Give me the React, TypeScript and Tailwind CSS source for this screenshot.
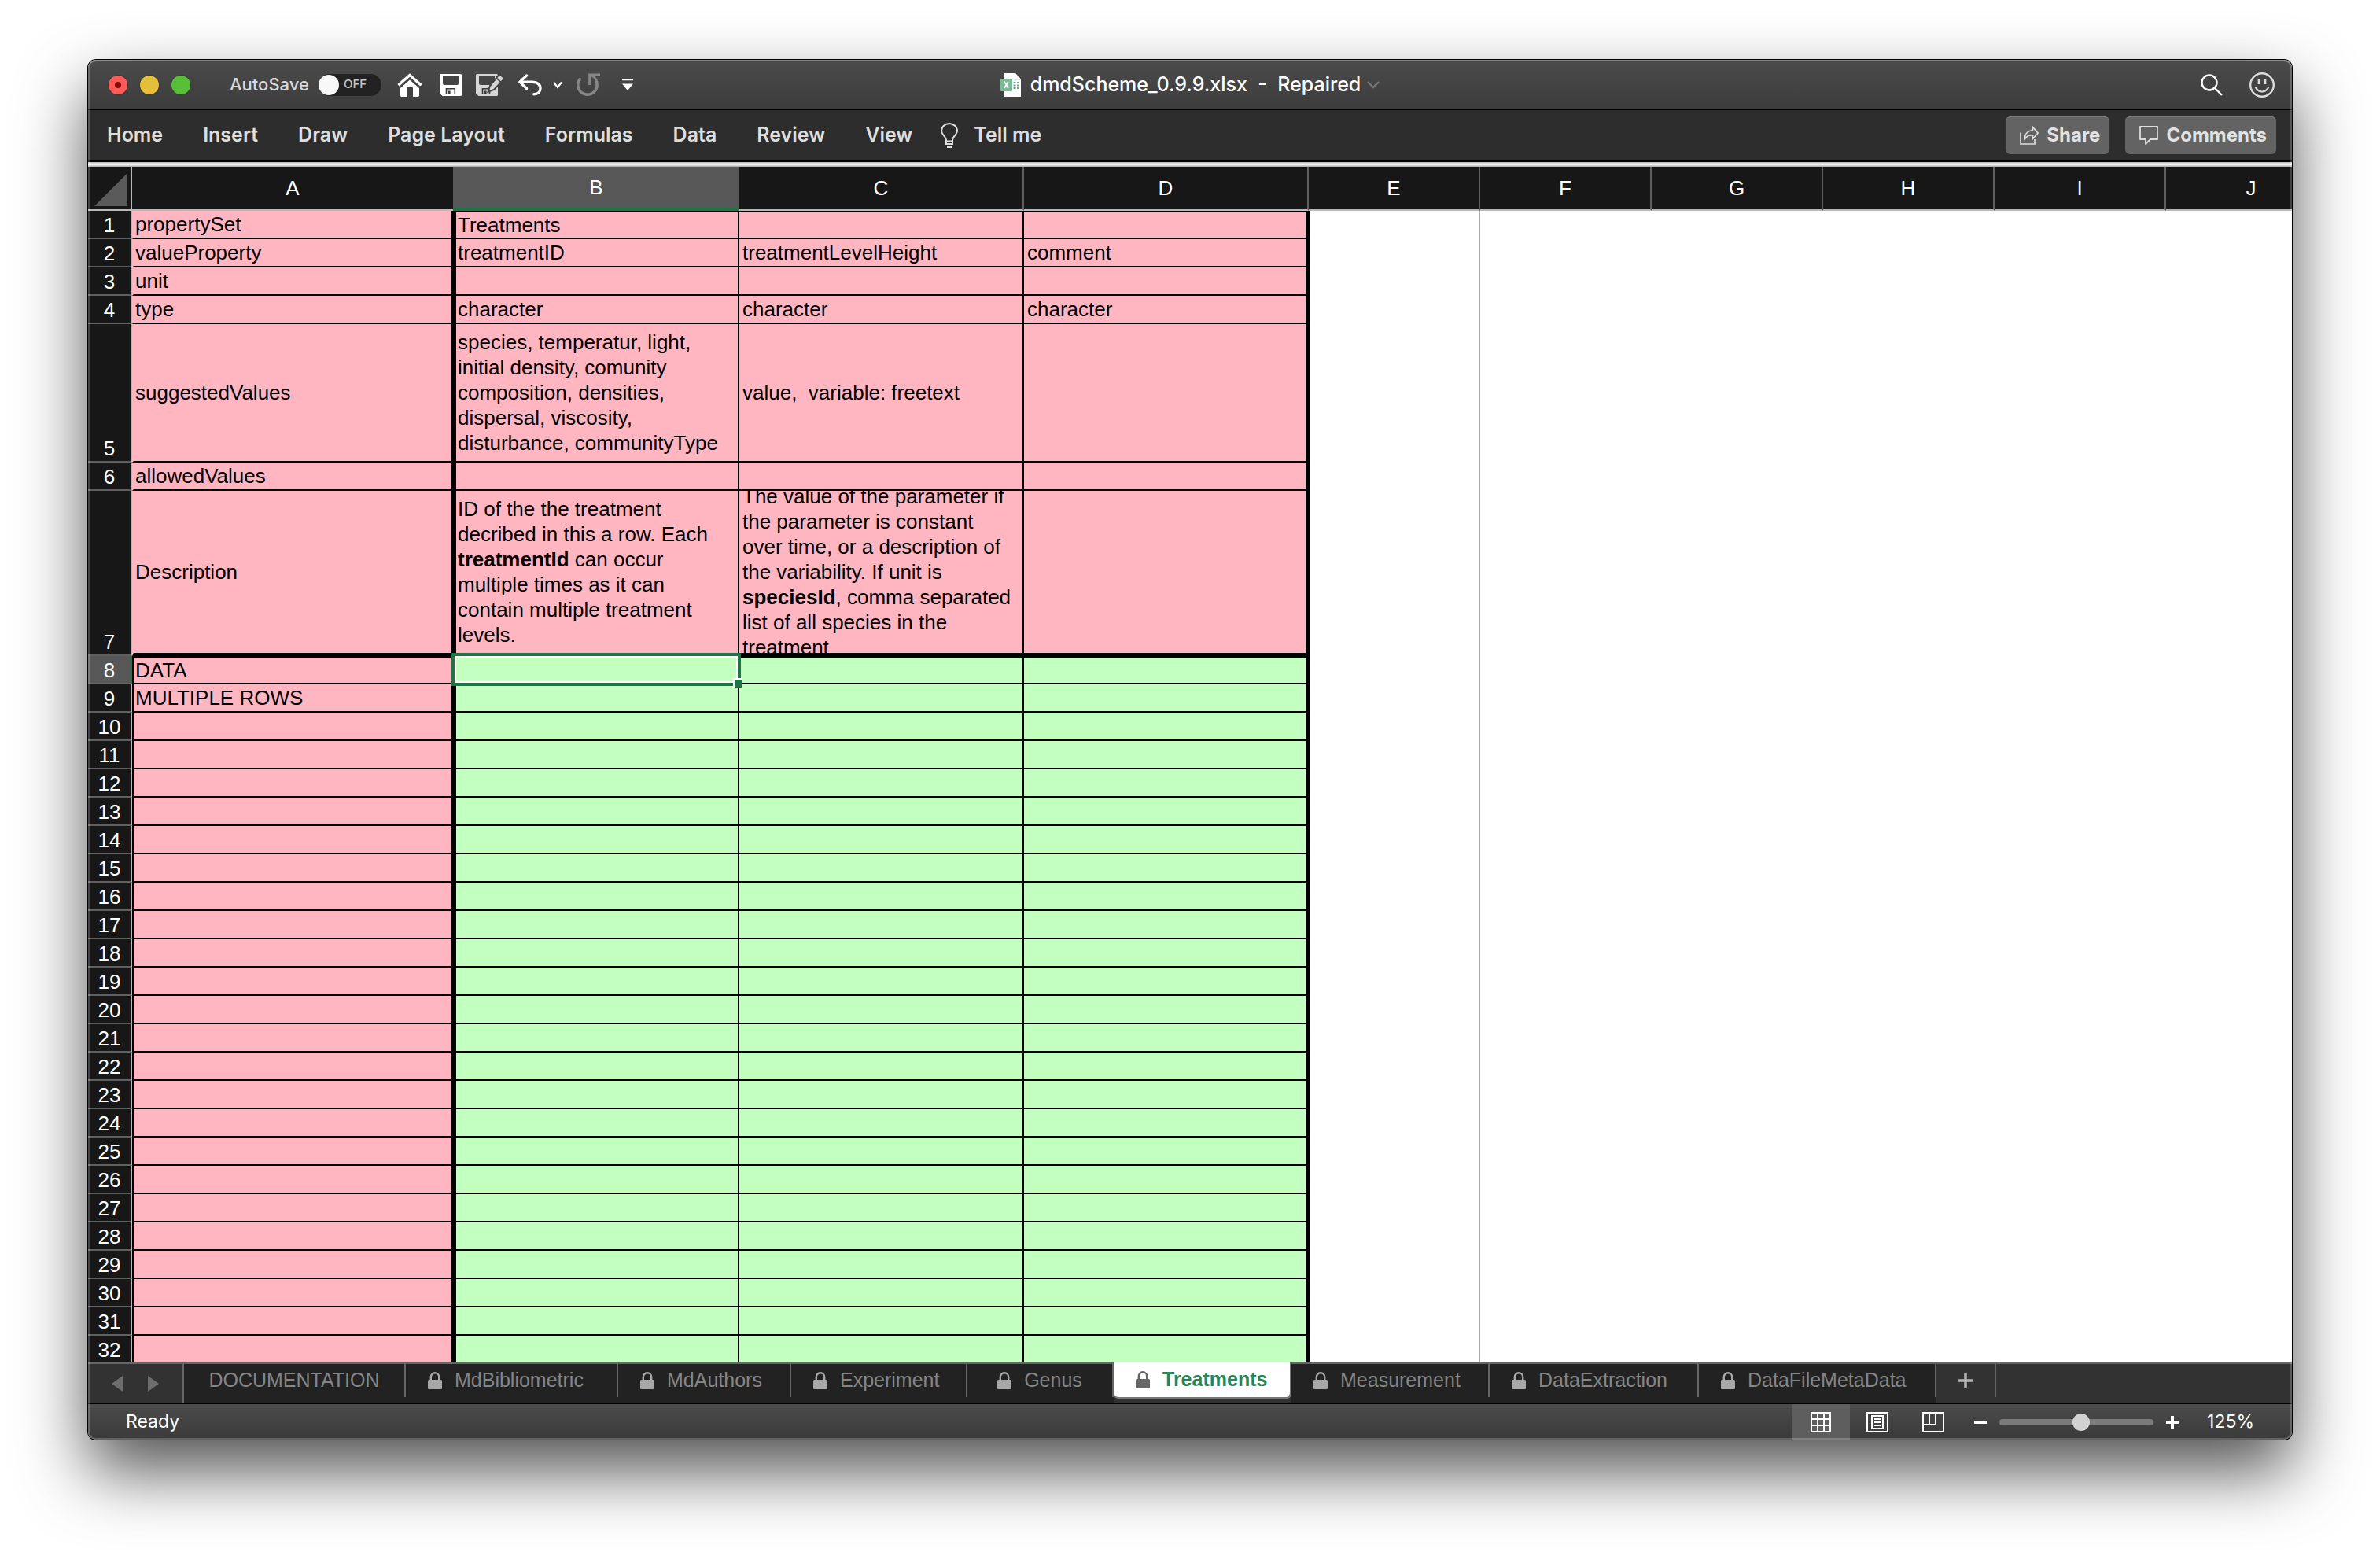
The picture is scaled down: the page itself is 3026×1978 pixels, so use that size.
import React from "react";

type Cell = React.ReactNode;

interface SheetRow {
  height: string;
  kind: "meta" | "metaEnd" | "data";
  cells: [Cell, Cell, Cell, Cell];
}

const metaRows: SheetRow[] = [
  { height: "h-9", kind: "meta", cells: ["propertySet", "Treatments", "", ""] },
  { height: "h-9", kind: "meta", cells: ["valueProperty", "treatmentID", "treatmentLevelHeight", "comment"] },
  { height: "h-9", kind: "meta", cells: ["unit", "", "", ""] },
  { height: "h-9", kind: "meta", cells: ["type", "character", "character", "character"] },
  {
    height: "h-[176px]",
    kind: "meta",
    cells: [
      "suggestedValues",
      "species, temperatur, light, initial density, comunity composition, densities, dispersal, viscosity, disturbance, communityType",
      "value,  variable: freetext",
      "",
    ],
  },
  { height: "h-9", kind: "meta", cells: ["allowedValues", "", "", ""] },
  {
    height: "h-[210px]",
    kind: "metaEnd",
    cells: [
      "Description",
      <>
        ID of the the treatment decribed in this a row. Each <b>treatmentId</b> can occur multiple times as it can
        contain multiple treatment levels.
      </>,
      <>
        The value of the parameter if the parameter is constant over time, or a description of the variability. If unit
        is <b>speciesId</b>, comma separated list of all species in the treatment
      </>,
      "",
    ],
  },
];

const dataRows: SheetRow[] = Array.from({ length: 25 }, (_, i) => ({
  height: "h-9",
  kind: "data" as const,
  cells: [i === 0 ? "DATA" : i === 1 ? "MULTIPLE ROWS" : "", "", "", ""] as [Cell, Cell, Cell, Cell],
}));

const rows = [...metaRows, ...dataRows];
const SELECTED_ROW = 8;

const ribbonTabs = ["Home", "Insert", "Draw", "Page Layout", "Formulas", "Data", "Review", "View"];

const sheets = [
  { name: "DOCUMENTATION", locked: false, size: "w-[282px] justify-center" },
  { name: "MdBibliometric", locked: true, size: "w-[270px] pl-7" },
  { name: "MdAuthors", locked: true, size: "w-[220px] pl-7" },
  { name: "Experiment", locked: true, size: "w-[224px] pl-7" },
  { name: "Genus", locked: true, size: "w-[186px] justify-center" },
  { name: "Treatments", locked: true, active: true, size: "w-[226px] pl-7" },
  { name: "Measurement", locked: true, size: "w-[252px] pl-7" },
  { name: "DataExtraction", locked: true, size: "w-[266px] pl-7" },
  { name: "DataFileMetaData", locked: true, size: "w-[302px] pl-7" },
];

function HomeIcon() {
  return (
    <svg className="h-[30px] w-8" viewBox="0 0 32 30" fill="none">
      <path d="M1.5 15.2 16 2.4l14.5 12.8" stroke="#fff" strokeWidth="3.4" />
      <path
        d="M16 8.6 28 19v9.6q0 1.4-1.4 1.4H20V19q0-1-1-1h-6q-1 0-1 1v11H5.4Q4 30 4 28.6V19z"
        fill="#fff"
      />
    </svg>
  );
}

function SaveIcon() {
  return (
    <svg className="size-7" viewBox="0 0 28 28" fill="none">
      <path
        fillRule="evenodd"
        d="M1.5 0h25Q28 0 28 1.5v25q0 1.5-1.5 1.5h-23L0 24.5v-23Q0 0 1.5 0zM4 2v10q0 2 2 2h16q2 0 2-2V2z"
        fill="#fff"
      />
      <path d="M8.5 26v-7.2h10.8V26" stroke="#3a3a3a" strokeWidth="1.6" />
      <path d="M10 21.5h3.6V26H10z" fill="#3a3a3a" />
    </svg>
  );
}

function SaveAsIcon() {
  return (
    <svg className="h-7 w-9" viewBox="0 0 36 28" fill="none">
      <path
        fillRule="evenodd"
        d="M1.5 0h25Q28 0 28 1.5v25q0 1.5-1.5 1.5h-23L0 24.5v-23Q0 0 1.5 0zM4 2v10q0 2 2 2h16q2 0 2-2V2z"
        fill="#d6d6d6"
      />
      <path d="M8.5 26v-7.2h9V26" stroke="#3a3a3a" strokeWidth="1.6" />
      <path d="M10 21.5h3.6V26H10z" fill="#3a3a3a" />
      <path
        d="m31.5 1.2 3.6 3.4q1.2 1.3 0 2.6L23 20l-7.5 2.8L18 15 29 1.3q1.2-1.3 2.5-.1z"
        fill="#d6d6d6"
        stroke="#434343"
        strokeWidth="2"
      />
      <path d="m25.8 4.8 6 5.6" stroke="#434343" strokeWidth="1.8" />
    </svg>
  );
}

function UndoIcon() {
  return (
    <svg className="h-7 w-[30px]" viewBox="0 0 30 28" fill="none" stroke="#fff" strokeWidth="3.4" strokeLinecap="round">
      <path d="M10.5 2 2 10.2l8.5 8.3" />
      <path d="M3 10.2h15.5c5.5 0 9.5 3.2 9.5 7.8s-3 7.8-8.2 7.8" />
    </svg>
  );
}

function RedoIcon() {
  return (
    <svg className="size-[30px]" viewBox="0 0 30 30" fill="none" stroke="#868686" strokeWidth="3.6">
      <path d="M4.2 7.6A12.2 12.2 0 1 0 25 10" strokeLinecap="round" />
      <path d="M17 15V2.2h13" />
      <path d="M17 2.2q7 2.4 9.5 9" strokeWidth="2.5" />
    </svg>
  );
}

function WorkbookIcon() {
  return (
    <svg className="h-[30px] w-[26px]" viewBox="0 0 26 30" fill="none">
      <path d="M4 0h15l7 7.5V30H4z" fill="#fff" />
      <path d="M18.5 0v8H26" stroke="#c9c9c9" strokeWidth="1" />
      <rect y="7" width="15" height="16" rx="1" fill="#7dbb98" />
      <path d="m5 10.5 5 8.5m0-8.5-5 8.5" stroke="#fff" strokeWidth="1.8" />
      <path d="M16.5 12h3m1.5 0h3m-7.5 3.5h3m1.5 0h3m-7.5 3.5h3m1.5 0h3" stroke="#6aa98c" strokeWidth="2.2" />
    </svg>
  );
}

function SmileIcon() {
  return (
    <svg className="size-8" viewBox="0 0 32 32" fill="none" stroke="#dcdcdc">
      <circle cx="16" cy="16" r="14.8" strokeWidth="2.4" />
      <path d="M12.2 8.5v6.5M19.8 8.5v6.5" strokeWidth="3" />
      <path d="M7.5 18.5q3 6 8.5 6t8.5-6" strokeWidth="2" />
    </svg>
  );
}

function ShareIcon() {
  return (
    <svg className="size-6" viewBox="0 0 24 24" fill="none" stroke="#dcdcdc" strokeWidth="1.7">
      <path d="M1 8.5V23h18v-6" />
      <path d="M16.5 1.5 23 9l-6.5 7.5V12Q9.5 11 6 17.5 6.5 6.5 16.5 5.5z" />
    </svg>
  );
}

function CommentIcon() {
  return (
    <svg className="size-6" viewBox="0 0 24 24" fill="none" stroke="#dcdcdc" strokeWidth="1.8">
      <path d="M1 1h22v16h-9l-6 6v-6H1z" strokeLinejoin="round" />
    </svg>
  );
}

function LockIcon({ color }: { color: string }) {
  return (
    <svg className="h-[22px] w-[18px] shrink-0" viewBox="0 0 18 22" fill="none">
      <path d="M3.8 11V6.5a5.2 5.2 0 0 1 10.4 0V11" stroke={color} strokeWidth="2.4" />
      <rect y="10" width="18" height="12" rx="1.5" fill={color} />
    </svg>
  );
}

function TitleBar() {
  return (
    <header className="grid h-16 shrink-0 grid-cols-[1fr_auto_1fr] items-center border-b border-black bg-linear-to-b from-[#4b4b4b] to-[#3c3c3c]">
      <div className="flex items-center pl-6.5">
        <div className="flex gap-4">
          <button aria-label="Close" className="flex size-6 items-center justify-center rounded-full bg-[#fc5b57] ring-1 ring-[#3f3536]">
            <span className="size-2 rounded-full bg-[#8a0a08]" />
          </button>
          <button aria-label="Minimize" className="size-6 rounded-full bg-[#e5bf3c] ring-1 ring-[#3f3b36]" />
          <button aria-label="Zoom window" className="size-6 rounded-full bg-[#57c038] ring-1 ring-[#363f36]" />
        </div>
        <span id="autosave" className="ml-12.5 text-[22px] font-medium text-[#d9d9d9]">
          AutoSave
        </span>
        <button
          role="switch"
          aria-checked="false"
          aria-labelledby="autosave"
          className="ml-3 flex h-7 w-20 items-center gap-1.5 rounded-full bg-[#222] text-[15px] font-medium text-[#c4c4c4]"
        >
          <span className="size-6.5 rounded-full bg-[#f8f8f8]" />
          OFF
        </button>
        <button aria-label="Home" className="ml-5">
          <HomeIcon />
        </button>
        <button aria-label="Save" className="ml-5.5">
          <SaveIcon />
        </button>
        <button aria-label="Save as" className="ml-4.5">
          <SaveAsIcon />
        </button>
        <button aria-label="Undo" className="ml-4.5">
          <UndoIcon />
        </button>
        <button aria-label="Undo history" className="ml-3.5">
          <svg className="h-3 w-3" viewBox="0 0 12 12" fill="none" stroke="#fff" strokeWidth="2.2">
            <path d="m1 2.5 5 6.5 5-6.5" />
          </svg>
        </button>
        <button aria-label="Redo" className="ml-4.5">
          <RedoIcon />
        </button>
        <button aria-label="Customize toolbar" className="ml-7">
          <svg className="h-4 w-[14px]" viewBox="0 0 14 16" fill="#fff">
            <path d="M0 0h14v2.2H0zM0 6.5h14L7 15z" />
          </svg>
        </button>
      </div>
      <h1 className="flex items-center text-[25px] font-medium text-white">
        <WorkbookIcon />
        <span className="ml-3 whitespace-pre">dmdScheme_0.9.9.xlsx&nbsp; -&nbsp; Repaired</span>
        <svg className="ml-2 h-3 w-4" viewBox="0 0 16 12" fill="none" stroke="#777" strokeWidth="2.4">
          <path d="m1 2 7 7 7-7" />
        </svg>
      </h1>
      <div className="flex items-center justify-end gap-8.5 pr-5.5">
        <button aria-label="Search">
          <svg className="size-7" viewBox="0 0 28 28" fill="none" stroke="#fff" strokeWidth="2.4">
            <circle cx="11" cy="11" r="9.5" />
            <path d="m17.5 17.5 9.5 9.5" />
          </svg>
        </button>
        <button aria-label="Feedback">
          <SmileIcon />
        </button>
      </div>
    </header>
  );
}

function Ribbon() {
  return (
    <nav className="flex h-[66px] shrink-0 items-center border-b-2 border-black bg-[#2d2d2d] pr-5 pl-6 text-[25px] font-semibold text-[#dedede]">
      <div className="flex gap-[51px]">
        {ribbonTabs.map((tab) => (
          <button key={tab}>{tab}</button>
        ))}
      </div>
      <button className="ml-9 flex items-center gap-5">
        <svg className="h-8 w-[22px]" viewBox="0 0 22 32" fill="none" stroke="#dedede" strokeWidth="2">
          <path d="M7 22.5C7 17.5 1 15 1 10.5a10 9.5 0 0 1 20 0C21 15 15 17.5 15 22.5V27H7zM7 23.5h8M8 31h6" />
        </svg>
        Tell me
      </button>
      <div className="ml-auto flex gap-5 text-[24px] font-bold text-[#e2e2e2]">
        <button className="flex h-12 items-center gap-2.5 rounded-md bg-[#636363] pr-3 pl-4.5 shadow-[inset_0_1px_0_#7c7c7c]">
          <ShareIcon />
          Share
        </button>
        <button className="flex h-12 items-center gap-2.5 rounded-md bg-[#636363] pr-3 pl-4.5 shadow-[inset_0_1px_0_#7c7c7c]">
          <CommentIcon />
          Comments
        </button>
      </div>
    </nav>
  );
}

function ColumnHeaders() {
  return (
    <thead>
      <tr className="h-14">
        <td className="border-r-2 border-b-2 border-r-[#b8b8b8] border-b-[#b8b8b8] bg-[#171717] p-0">
          <button aria-label="Select all" className="flex h-[54px] w-full items-end justify-end pr-1 pb-1">
            <svg className="size-[42px]" viewBox="0 0 42 42" fill="#5a5a5a">
              <path d="M42 0v42H0z" />
            </svg>
          </button>
        </td>
        <th scope="col" className="border-b-2 border-[#b8b8b8] bg-[#171717] p-0 font-medium">
          A
        </th>
        <th scope="col" className="border-b-4 border-[#217346] bg-[#575757] p-0 font-medium">
          B
        </th>
        {["C", "D", "E", "F", "G", "H", "I", "J"].map((c) => (
          <th
            scope="col"
            key={c}
            className="border-r-2 border-b-2 border-r-[#5f5f5f] border-b-[#b8b8b8] bg-[#171717] p-0 font-medium"
          >
            {c}
          </th>
        ))}
      </tr>
    </thead>
  );
}

function Row({ row, n }: { row: SheetRow; n: number }) {
  const data = row.kind === "data";
  const bottom = row.kind === "metaEnd" ? "border-b-4" : "border-b-2";
  const top = n === 1 || n === SELECTED_ROW ? "border-t-2" : "";
  const fill = data ? "bg-[#c4ffc2]" : "bg-[#ffb6c1]";
  const inner = row.height === "h-[210px]" ? "max-h-[206px]" : row.height === "h-[176px]" ? "max-h-[174px]" : "max-h-[34px]";
  const content = (c: Cell) => (
    <div className={`flex items-center overflow-hidden ${inner}`}>
      <div className="whitespace-pre-wrap">{c}</div>
    </div>
  );
  const selected = n === SELECTED_ROW;
  return (
    <tr className={row.height}>
      <th
        scope="row"
        className={`border-r-2 p-0 text-center align-bottom text-[26px] leading-8 font-normal text-white ${
          selected
            ? "border-b-2 border-r-[#217346] border-b-[#666] bg-[#575757]"
            : "border-b-2 border-r-[#b8b8b8] border-b-[#5f5f5f] bg-[#171717]"
        }`}
      >
        {n}
      </th>
      <td
        className={`border-r-2 border-l-2 border-black bg-[#ffb6c1] py-0 pr-2 pl-0.5 ${bottom} ${
          n === SELECTED_ROW ? "border-t-2" : ""
        } ${data ? "" : "border-l-[#ffb6c1]"}`}
      >
        {content(row.cells[0])}
      </td>
      <td className={`relative border-r-2 border-l-4 border-black py-0 pr-2 pl-0.5 ${bottom} ${top} ${fill}`}>
        {content(row.cells[1])}
        {selected && (
          <div className="absolute -top-1.5 -right-1 -bottom-1 -left-1.5 z-10 border-4 border-[#217346] shadow-[inset_0_0_0_2px_#fff]">
            <div className="absolute -right-1.5 -bottom-1.5 size-3 border-t-2 border-l-2 border-white bg-[#217346]" />
          </div>
        )}
      </td>
      <td className={`border-r-2 border-black py-0 pr-2 pl-1 ${bottom} ${top} ${fill}`}>{content(row.cells[2])}</td>
      <td className={`border-r-4 border-black py-0 pr-2 pl-1 ${bottom} ${top} ${fill}`}>{content(row.cells[3])}</td>
      <td className="border-r-2 border-l-2 border-r-[#aaa] border-l-black bg-white" />
      <td colSpan={5} className="bg-white" />
    </tr>
  );
}

function Grid() {
  return (
    <main className="min-h-0 flex-1 overflow-hidden bg-white">
      <table className="w-full table-fixed border-separate border-spacing-0 font-['Liberation_Sans',sans-serif] text-[26px] leading-8 text-black [&_thead]:text-white">
        <colgroup>
          <col className="w-14" />
          <col className="w-[408px]" />
          <col className="w-[364px]" />
          <col className="w-[362px]" />
          <col className="w-[362px]" />
          <col className="w-[218px]" />
          <col className="w-[218px]" />
          <col className="w-[218px]" />
          <col className="w-[218px]" />
          <col className="w-[218px]" />
          <col className="w-[218px]" />
        </colgroup>
        <ColumnHeaders />
        <tbody>
          {rows.map((row, i) => (
            <Row key={i} row={row} n={i + 1} />
          ))}
        </tbody>
      </table>
    </main>
  );
}

function SheetTabs() {
  return (
    <div className="flex h-[53px] shrink-0 border-t-2 border-b border-t-[#666] border-b-black bg-[#323232] font-['Liberation_Sans',sans-serif] text-[25px]">
      <div className="flex w-30 items-center gap-8 pl-[30px]">
        <button aria-label="Previous sheet">
          <svg className="h-5 w-3.5" viewBox="0 0 14 20" fill="#6e6e6e">
            <path d="M14 0v20L0 10z" />
          </svg>
        </button>
        <button aria-label="Next sheet">
          <svg className="h-5 w-3.5" viewBox="0 0 14 20" fill="#6e6e6e">
            <path d="M0 0v20l14-10z" />
          </svg>
        </button>
      </div>
      <div role="tablist" className="flex border-l-2 border-[#666]">
        {sheets.map((s) =>
          s.active ? (
            <button
              key={s.name}
              role="tab"
              aria-selected="true"
              className={`-mt-0.5 flex h-11 items-center gap-4 rounded-b-md border-r-2 border-[#777] bg-white font-bold text-[#2a8456] shadow-[0_2px_0_#777] ${s.size}`}
            >
              <LockIcon color="#666" />
              {s.name}
            </button>
          ) : (
            <div key={s.name} className="flex items-start bg-[#222]">
              <button
                role="tab"
                aria-selected="false"
                className={`flex h-[42px] items-center gap-4 border-r-2 border-[#666] text-[#858585] ${s.size}`}
              >
                {s.locked && <LockIcon color="#a8a8a8" />}
                {s.name}
              </button>
            </div>
          ),
        )}
      </div>
      <button aria-label="New sheet" className="flex h-[42px] w-[76px] items-center justify-center border-r-2 border-[#666]">
        <svg className="size-5" viewBox="0 0 20 20" stroke="#b4b4b4" strokeWidth="3.5">
          <path d="M10 0v20M0 10h20" />
        </svg>
      </button>
    </div>
  );
}

function StatusBar() {
  return (
    <footer className="flex h-[45px] shrink-0 items-stretch bg-linear-to-b from-[#4b4b4b] to-[#3a3a3a] pr-12 pl-12 text-[23px] text-white">
      <span className="mr-auto self-center">Ready</span>
      <button aria-label="Normal view" aria-pressed="true" className="flex w-[74px] items-center justify-center bg-[#5e5e5e]">
        <svg className="size-[26px]" viewBox="0 0 26 26" fill="none" stroke="#fff" strokeWidth="2">
          <path d="M1 1h24v24H1zM9 1v24M17 1v24M1 9h24M1 17h24" />
        </svg>
      </button>
      <button aria-label="Page layout view" className="flex w-[70px] items-center justify-center">
        <svg className="h-[26px] w-7" viewBox="0 0 28 26" fill="none" stroke="#fff" strokeWidth="2">
          <path d="M1 1h26v24H1zM7 5h14v16H7zM10 9h8M10 13h8M10 17h8" />
        </svg>
      </button>
      <button aria-label="Page break view" className="flex w-[72px] items-center justify-center">
        <svg className="h-[26px] w-7" viewBox="0 0 28 26" fill="none" stroke="#fff" strokeWidth="2">
          <path d="M1 1h26v24H1zM1 16h16V1M9 1v15" />
        </svg>
      </button>
      <button aria-label="Zoom out" className="ml-4">
        <svg className="size-4" viewBox="0 0 16 16" stroke="#fff" strokeWidth="4">
          <path d="M0 8h16" />
        </svg>
      </button>
      <input
        type="range"
        aria-label="Zoom"
        min={0}
        max={1000}
        defaultValue={534}
        className="mx-4 h-2 w-[196px] appearance-none self-center rounded-full bg-[#7b7b7b] [&::-webkit-slider-thumb]:size-[22px] [&::-webkit-slider-thumb]:appearance-none [&::-webkit-slider-thumb]:rounded-full [&::-webkit-slider-thumb]:bg-[#d2d2d2]"
      />
      <button aria-label="Zoom in">
        <svg className="size-4" viewBox="0 0 16 16" stroke="#fff" strokeWidth="4">
          <path d="M0 8h16M8 0v16" />
        </svg>
      </button>
      <button className="ml-9">125%</button>
    </footer>
  );
}

export default function App() {
  return (
    <div className="flex h-screen flex-col bg-white px-28 pt-19 pb-37 font-['Inter',sans-serif]">
      <div className="relative flex min-h-0 flex-1 flex-col rounded-[10px] shadow-[0_0_0_1px_#000,0_40px_86px_rgba(0,0,0,0.68)]">
        <div className="flex min-h-0 flex-1 flex-col overflow-hidden rounded-[10px]">
          <TitleBar />
          <Ribbon />
          <div className="h-1.5 shrink-0 bg-linear-to-b from-[#b5b5b5] via-white to-[#a5a5a5]" />
          <Grid />
          <SheetTabs />
          <StatusBar />
        </div>
        <div className="pointer-events-none absolute inset-0 rounded-[10px] shadow-[inset_0_0_0_2px_rgba(255,255,255,0.2),inset_0_2px_0_rgba(255,255,255,0.2)]" />
      </div>
    </div>
  );
}
